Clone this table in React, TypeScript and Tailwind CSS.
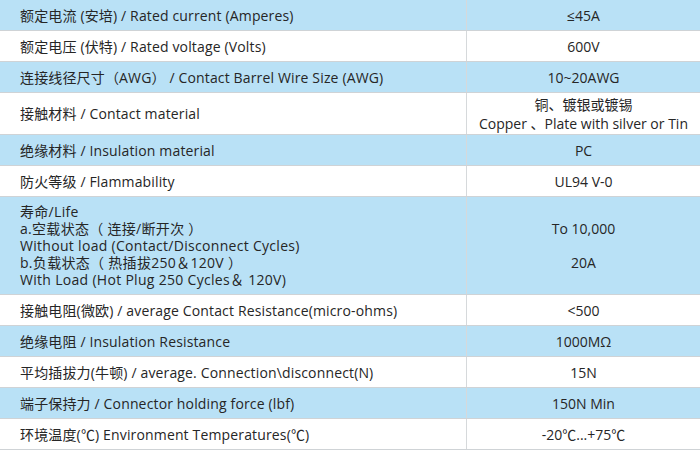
import React from "react";

type Row = {
  label: React.ReactNode;
  value: React.ReactNode;
  blue: boolean;
  h: string;
};

const rows: Row[] = [
  { label: "额定电流 (安培) / Rated current (Amperes)", value: "≤45A", blue: true, h: "h-[31px]" },
  { label: "额定电压 (伏特) / Rated voltage (Volts)", value: "600V", blue: false, h: "h-[31px]" },
  { label: "连接线径尺寸（AWG） / Contact Barrel Wire Size (AWG)", value: "10~20AWG", blue: true, h: "h-[31px]" },
  {
    label: "接触材料 / Contact material",
    value: (
      <div className="leading-[19px]">
        <p>铜、镀银或镀锡</p>
        <p>Copper 、Plate with silver or Tin</p>
      </div>
    ),
    blue: false,
    h: "h-[42px]",
  },
  { label: "绝缘材料 / Insulation material", value: "PC", blue: true, h: "h-[31px]" },
  { label: "防火等级 / Flammability", value: "UL94 V-0", blue: false, h: "h-[31px]" },
  {
    label: (
      <div className="leading-[17px] tracking-[0.3px]">
        <p>寿命/Life</p>
        <p>a.空载状态（ 连接/断开次 ）</p>
        <p>Without load (Contact/Disconnect Cycles)</p>
        <p>b.负载状态（ 热插拔250＆120V ）</p>
        <p>With Load (Hot Plug 250 Cycles＆ 120V)</p>
      </div>
    ),
    value: (
      <div className="leading-[17px]">
        <p>To 10,000</p>
        <p>&nbsp;</p>
        <p>20A</p>
      </div>
    ),
    blue: true,
    h: "h-[98px]",
  },
  { label: "接触电阻(微欧) / average Contact Resistance(micro-ohms)", value: "<500", blue: false, h: "h-[31px]" },
  { label: "绝缘电阻 / Insulation Resistance", value: "1000MΩ", blue: true, h: "h-[31px]" },
  { label: "平均插拔力(牛顿) / average. Connection\\disconnect(N)", value: "15N", blue: false, h: "h-[31px]" },
  { label: "端子保持力 / Connector holding force (lbf)", value: "150N Min", blue: true, h: "h-[31px]" },
  { label: "环境温度(℃) Environment Temperatures(℃)", value: "-20℃...+75℃", blue: false, h: "h-[31px]" },
];

export default function App() {
  return (
    <div className="w-[700px] h-[450px] overflow-hidden bg-white text-[14px] text-[#262626] font-['Open_Sans','Noto_Sans_CJK_SC',sans-serif]">
      {rows.map((r, i) => (
        <div
          key={`spec-row-${i}`}
          className={`flex ${r.h} border-b border-[#cfd3d6] ${r.blue ? "bg-[#b9e1f6]" : "bg-white"}`}
        >
          <div className="w-[467px] flex items-center pl-5 tracking-[0.15px] border-r border-[#d6d9db]">{r.label}</div>
          <div className="flex-1 flex items-center justify-center text-center">{r.value}</div>
        </div>
      ))}
    </div>
  );
}
